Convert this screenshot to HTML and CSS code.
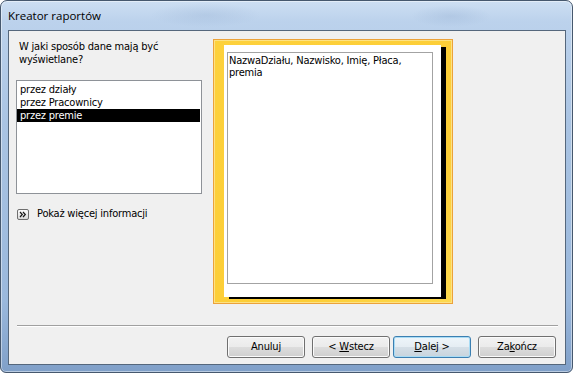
FILE: index.html
```html
<!DOCTYPE html>
<html lang="pl">
<head>
<meta charset="utf-8">
<title>Kreator raportów</title>
<link rel="stylesheet" href="styles.css">
</head>
<body>
<div class="window">
  <div class="titlebar"><span class="title">Kreator raportów</span></div>
  <div class="client">
    <div class="main">
      <div class="left">
        <p class="question">W jaki sposób dane mają być<br>wyświetlane?</p>
        <ul class="listbox">
          <li class="item">przez działy</li>
          <li class="item">przez Pracownicy</li>
          <li class="item selected">przez premie</li>
        </ul>
        <div class="more">
          <svg class="more-icon" width="12" height="11" viewBox="0 0 12 11">
            <defs>
              <linearGradient id="mg" x1="0" y1="0" x2="0" y2="1">
                <stop offset="0" stop-color="#ffffff"/>
                <stop offset="1" stop-color="#d8d8d8"/>
              </linearGradient>
            </defs>
            <rect x="0.5" y="0.5" width="11" height="10" rx="1.5" fill="url(#mg)" stroke="#6f6f6f"/>
            <path d="M3 3 L5.3 5.5 L3 8 M6 3 L8.3 5.5 L6 8" fill="none" stroke="#1a1a1a" stroke-width="1.2"/>
          </svg>
          <span class="more-text">Pokaż więcej informacji</span>
        </div>
      </div>
      <div class="preview">
        <div class="page">
          <div class="fields">NazwaDziału, Nazwisko, Imię, Płaca,<br>premia</div>
        </div>
      </div>
    </div>
    <div class="separator"></div>
    <div class="buttons">
      <button class="btn">Anuluj</button>
      <button class="btn btn-back">&lt; <u>W</u>stecz</button>
      <button class="btn btn-default"><u>D</u>alej &gt;</button>
      <button class="btn btn-finish">Za<u>k</u>ończ</button>
    </div>
  </div>
</div>
</body>
</html>
```
FILE: styles.css
```css
html, body {
  margin: 0;
  padding: 0;
  width: 573px;
  height: 373px;
  overflow: hidden;
  background: #ffffff;
}

.window {
  box-sizing: border-box;
  width: 573px;
  height: 373px;
  border: 1px solid #46586e;
  border-radius: 7px 7px 6px 6px;
  display: flex;
  flex-direction: column;
  background:
    radial-gradient(ellipse 55px 12px at 205px 14px, rgba(120,150,190,0.18), rgba(120,150,190,0) 100%),
    radial-gradient(ellipse 40px 11px at 450px 15px, rgba(120,150,190,0.2), rgba(120,150,190,0) 100%),
    linear-gradient(to bottom, #cddff3 0px, #bcd2ec 20px, #aac4e3 120px, #9ab8dc 300px, #7f9fc8 373px);
  box-shadow: inset 0 0 0 1px rgba(255,255,255,0.45);
}

.titlebar {
  height: 29px;
  display: flex;
  align-items: center;
  padding-left: 7px;
  flex-shrink: 0;
}

.title {
  font-family: "Open Sans", "Noto Sans", sans-serif;
  font-size: 11.5px;
  color: #000000;
  line-height: 14px;
}

.client {
  box-sizing: border-box;
  height: 335px;
  margin: 0 6px 7px 7px;
  border: 1px solid #55677c;
  background: #f0f0f0;
  display: flex;
  flex-direction: column;
  font-family: "DejaVu Sans Condensed", "DejaVu Sans", sans-serif;
  font-size: 11px;
  letter-spacing: -0.2px;
  color: #000000;
}

.main {
  display: flex;
  gap: 11px;
  padding: 8px 0 0 7px;
}

.left {
  width: 186px;
  padding-top: 1px;
  display: flex;
  flex-direction: column;
}

.question {
  margin: 0;
  padding-left: 3px;
  line-height: 13px;
}

.listbox {
  box-sizing: border-box;
  list-style: none;
  margin: 14px 0 0 0;
  padding: 2px 1px 0 0;
  height: 114px;
  background: #ffffff;
  border: 1px solid #8e9298;
}

.item {
  height: 13px;
  line-height: 13px;
  padding-left: 3px;
  white-space: nowrap;
}

.selected {
  background: #000000;
  color: #ffffff;
}

.more {
  display: flex;
  align-items: center;
  gap: 8px;
  margin-top: 13px;
  padding-left: 1px;
  height: 14px;
}

.more-icon {
  display: block;
  flex-shrink: 0;
}

.more-text {
  line-height: 14px;
}

.preview {
  box-sizing: border-box;
  width: 240px;
  height: 265px;
  border: 1px solid #eca23a;
  background: linear-gradient(135deg, #fdd13c 0%, #fccd36 70%, #fdd94f 100%);
  box-shadow: inset 0 0 0 1px #fde283;
  padding: 5px 0 0 10px;
}

.page {
  box-sizing: border-box;
  width: 217px;
  height: 252px;
  background: #ffffff;
  box-shadow: 5px 2px 0 0 #000000;
  padding: 7px 0 0 3px;
}

.fields {
  box-sizing: border-box;
  width: 206px;
  height: 232px;
  border: 1px solid #a3a3a3;
  background: #ffffff;
  padding: 2px 0 0 1px;
  line-height: 12px;
}

.separator {
  margin: 21px 7px 0 8px;
  height: 0;
  border-top: 1px solid #a0a0a0;
  border-bottom: 1px solid #ffffff;
}

.buttons {
  display: flex;
  justify-content: flex-end;
  gap: 7px;
  margin-top: 9px;
  padding-right: 9px;
}

.btn {
  box-sizing: border-box;
  width: 78px;
  height: 22px;
  margin: 0;
  padding: 0;
  font-family: "DejaVu Sans Condensed", "DejaVu Sans", sans-serif;
  font-size: 11px;
  letter-spacing: -0.2px;
  line-height: 20px;
  color: #000000;
  border: 1px solid #707070;
  border-radius: 3px;
  background: linear-gradient(to bottom, #f2f2f2 0%, #ebebeb 50%, #dddddd 50%, #cfcfcf 100%);
  box-shadow: inset 0 0 0 1px #fbfbfb;
}

.btn u {
  text-decoration: underline;
  text-underline-offset: 1px;
}

.btn-default {
  margin-left: -4px;
  border-color: #3c7fb1;
  background: linear-gradient(to bottom, #eef5fa 0%, #e5edf3 50%, #d5dfe7 50%, #c8d4dd 100%);
  box-shadow: inset 0 0 0 1px #a9dcf5;
}
```
